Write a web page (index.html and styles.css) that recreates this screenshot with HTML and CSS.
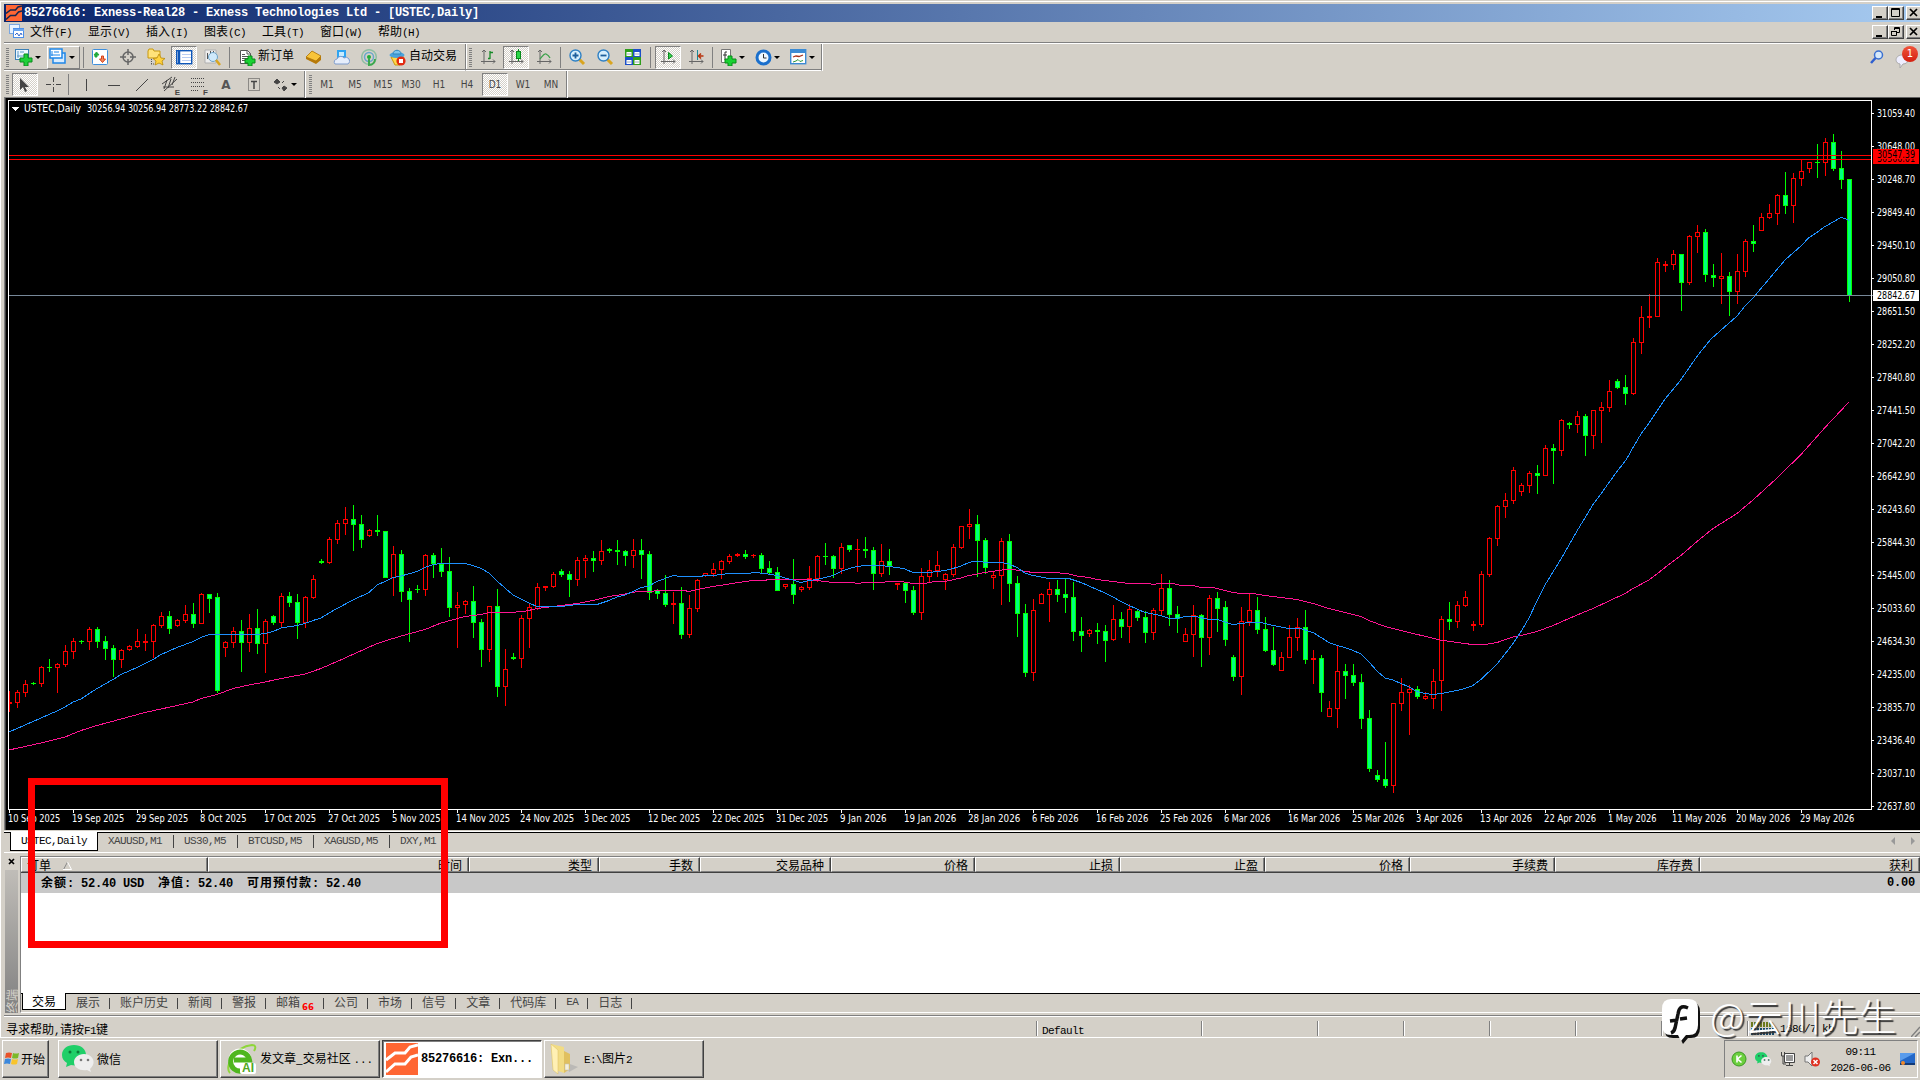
FILE: index.html
```html
<!DOCTYPE html>
<html lang="zh-CN">
<head>
    <meta charset="UTF-8">
    <title>85276616: Exness-Real28 - Exness Technologies Ltd - [USTEC,Daily]</title>
    <link rel="stylesheet" href="styles.css">
</head>
<body>
    <div class="window">
        <div class="titlebar">
            <svg class="app-icon" width="16" height="16" viewBox="0 0 32 32"><rect width="32" height="32" fill="#f63"/><path d="M0 17l9-7h10l5-6 8-2M0 29l9-8h10l6-7 7-2" fill="none" stroke="#12264f" stroke-width="3"/></svg>
            <span class="title">85276616: Exness-Real28 - Exness Technologies Ltd - [USTEC,Daily]</span>
            <div class="win-btns">
                <b><svg width="14" height="12"><path d="M3 9h6v2H3z"/></svg></b>
                <b><svg width="14" height="12"><path d="M2.500 1.500h8v8h-8zM2 2.500h9" fill="none" stroke="#000"/></svg></b>
                <b class="gap"><svg width="14" height="12"><path d="M3 2l7 7M10 2l-7 7" stroke="#000" stroke-width="1.700"/></svg></b>
            </div>
        </div>
        <div class="menubar">
            <svg class="menu-icon" width="15" height="15"><rect x=".5" y=".5" width="10" height="9" fill="#e8f3ff" stroke="#7aa7e0"/><rect x="4.500" y="4.500" width="10" height="9" fill="#fff" stroke="#4c8fe8"/><path d="M4 5h11v2H4z" fill="#6aa5f0"/><path d="M6 11l2-2 2 3 2-3 1 2" fill="none" stroke="#36c"/></svg>
            <span>文件<i>(F)</i></span><span>显示<i>(V)</i></span><span>插入<i>(I)</i></span><span>图表<i>(C)</i></span><span>工具<i>(T)</i></span><span>窗口<i>(W)</i></span><span>帮助<i>(H)</i></span>
            <div class="win-btns">
                <b><svg width="14" height="12"><path d="M3 9h6v2H3z"/></svg></b>
                <b><svg width="14" height="12"><path d="M5.500 4V1.500h5v5H8M5 2.500h6M2.500 5.500h5v4h-5zM2 5.500h6" fill="none" stroke="#000"/></svg></b>
                <b class="gap"><svg width="14" height="12"><path d="M3 2l7 7M10 2l-7 7" stroke="#000" stroke-width="1.700"/></svg></b>
            </div>
        </div>

        <div class="toolbar">
            <div class="band band-main">
                <em class="grip"></em>
                <div class="drop new-chart">
                    <svg width="18" height="18"><rect x=".5" y="1.500" width="13" height="10" fill="#eef7ff" stroke="#3c7fb5"/><path d="M3 3v7M2 8h9M5 4h4" stroke="#5a9ac8"/><path d="M9 6h4v4h4v4h-4v4H9v-4H5v-4h4z" fill="#1fd03a" stroke="#0a8a1c"/></svg>
                </div>
                <div class="drop raised">
                    <svg width="18" height="18"><rect x="4" y="5" width="12" height="10" fill="#d8ecff" stroke="#1e86e8" stroke-width="1.500"/><rect x="1" y="1" width="12" height="9" fill="#fff" stroke="#1e86e8" stroke-width="1.500"/><path d="M3 3v5M2 7h9M5 4h5" stroke="#1e86e8"/></svg>
                </div>
                <em class="sep"></em>
                <div class="tool"><svg width="16" height="16"><rect x=".5" y=".5" width="15" height="15" rx="1" fill="#fff" stroke="#3f8fdc"/><path d="M3 8h2V6h2L4.500 3 2 6h1z" fill="#22a93a" stroke="#22a93a"/><path d="M9.500 7h2v3h2l-3 3.500-3-3.500h2z" fill="#f08a5c" stroke="#d8401a"/></svg></div>
                <div class="tool"><svg width="16" height="16" fill="none" stroke="#666" stroke-width="1.500"><circle cx="8" cy="8" r="5"/><path d="M8 0v6M8 10v6M0 8h6M10 8h6"/></svg></div>
                <div class="tool"><svg width="18" height="18"><path d="M1 3l1-2h4l1 2h6v7H1z" fill="#ffe27a" stroke="#c8980c"/><path d="M4.500 11v6M4 16h4" stroke="#555" stroke-dasharray="1 1"/><path d="M12 6l2 4 4 .5-3 2.500 1 4-4-2-4 2 1-4-3-2.500 4-.5z" fill="#ffd23e" stroke="#b98908" stroke-width=".8"/></svg></div>
                <div class="tool on"><svg width="17" height="15"><rect x=".7" y=".7" width="15" height="13" fill="#fff" stroke="#0d56b8" stroke-width="1.400"/><path d="M3 1v13" stroke="#0d56b8" stroke-width="2.500"/><path d="M6 4.500h9M6 7.500h9M6 10.500h9" stroke="#b8cdf2"/></svg></div>
                <div class="tool"><svg width="17" height="17"><path d="M1 1h11v13H1z" fill="#eee" stroke="#b0b0b0"/><path d="M3.500 4v6M6.500 2v4M9.500 2v3" stroke="#555"/><circle cx="9" cy="8" r="4.500" fill="#cfe9fb" stroke="#6ea2c6"/><path d="M12 11l4 5" stroke="#d9a520" stroke-width="2.500"/></svg></div>
                <em class="sep"></em>
                <div class="label-tool order"><svg width="17" height="17"><path d="M1.500 1.500h7l3 3v10h-10z" fill="#fff" stroke="#555"/><path d="M8 1v4h4M3 7.500h6M3 9.500h6M3 11.500h4M3 5.500h3" stroke="#555" fill="none"/><path d="M9 7h4v3h3v4h-3v3H9v-3H6v-4h3z" fill="#19d132" stroke="#088a18"/></svg><span>新订单</span></div>
                <div class="tool"><svg width="17" height="16"><path d="M1 8l6-6 9 5v4l-5 4-10-5z" fill="#b87a08"/><path d="M1 8l6-6 9 5-5 5z" fill="#f8c43a" stroke="#a87008" stroke-width=".7"/></svg></div>
                <div class="tool"><svg width="17" height="17"><path d="M4 1h9v9H4z" fill="#2ea4f2"/><path d="M6 3h5v4H6z" fill="#c8ecff"/><path d="M2 15a3 3 0 0 1 2-5 4 4 0 0 1 7-1 3 3 0 0 1 4 6z" fill="#e6eefb" stroke="#7f9ccc"/></svg></div>
                <div class="tool"><svg width="17" height="17" fill="none"><circle cx="8" cy="8" r="7.300" stroke="#8fbfa4" stroke-width="1.500"/><circle cx="8" cy="8" r="4.500" stroke="#6aa6cc" stroke-width="1.500"/><circle cx="8" cy="8" r="2" fill="#1fae3a"/><path d="M8 9v7c4 0 6-3 6-6" stroke="#3ba84e" stroke-width="2"/></svg></div>
                <div class="label-tool auto"><svg width="17" height="17"><path d="M2 8h13l-4 8H6z" fill="#ffd84a" stroke="#c8980c"/><ellipse cx="8" cy="6" rx="7.500" ry="3" fill="#4aa3dc"/><path d="M4 5c0-5 8-5 8 0z" fill="#7cc4ee" stroke="#2f86bd"/><circle cx="12" cy="12" r="4.600" fill="#e22b12"/><rect x="10" y="10" width="4" height="4" fill="#fff"/></svg><span>自动交易</span></div>
            </div>
            <div class="band band-chart">
                <em class="grip"></em>
                <div class="tool"><svg width="15" height="16"><path d="M3 1v14M0 12.500h14M1 3l2-2 2 2M12 10.500l2 2-2 2" fill="none" stroke="#666"/><path d="M9 2v8M9 3.500h3M7 9.500h2" stroke="#178a28" stroke-width="1.300"/></svg></div>
                <div class="tool on"><svg width="15" height="16"><path d="M3 1v14M0 12.500h14M1 3l2-2 2 2M12 10.500l2 2-2 2" fill="none" stroke="#666"/><path d="M9.500 0v12" stroke="#078a1b"/><rect x="7.500" y="2.500" width="4" height="7" fill="#2bd648" stroke="#078a1b"/></svg></div>
                <div class="tool"><svg width="15" height="16"><path d="M3 1v14M0 12.500h14M1 3l2-2 2 2M12 10.500l2 2-2 2" fill="none" stroke="#666"/><path d="M3 10c2-2 4-6 6-5s3 2 4 4" fill="none" stroke="#3da24b" stroke-width="1.300"/></svg></div>
                <em class="sep"></em>
                <div class="tool"><svg width="17" height="17"><path d="M10 10l5 5" stroke="#d9a520" stroke-width="3"/><circle cx="6.500" cy="6.500" r="5.500" fill="#d6effd" stroke="#2f80c4" stroke-width="1.400"/><path d="M3.500 6.500h6M6.500 3.500v6" stroke="#1d5f9c" stroke-width="1.800"/></svg></div>
                <div class="tool"><svg width="17" height="17"><path d="M10 10l5 5" stroke="#d9a520" stroke-width="3"/><circle cx="6.500" cy="6.500" r="5.500" fill="#d6effd" stroke="#2f80c4" stroke-width="1.400"/><path d="M3.500 6.500h6" stroke="#1d5f9c" stroke-width="1.800"/></svg></div>
                <div class="tool"><svg width="16" height="16"><path d="M0 0h8v8H0zM8 8h8v8H8z" fill="#2f9e1c"/><path d="M8 0h8v8H8zM0 8h8v8H0z" fill="#1c4fc8"/><path d="M1.500 3h5v4h-5zM9.500 3h5v4h-5zM1.500 11h5v4h-5zM9.500 11h5v4h-5z" fill="#fff"/><path d="M2 5h4M10 5h4M2 13h4M10 13h4" stroke="#9ab"/></svg></div>
                <em class="sep wide"></em>
                <div class="tool on"><svg width="15" height="16"><path d="M3 1v14M0 12.500h14M1 3l2-2 2 2M12 10.500l2 2-2 2" fill="none" stroke="#666"/><path d="M7.500 3.500l4 3.500-4 3z" fill="#35d04c" stroke="#078a1b"/></svg></div>
                <div class="tool"><svg width="15" height="16"><path d="M3 1v14M0 12.500h14M1 3l2-2 2 2M12 10.500l2 2-2 2" fill="none" stroke="#666"/><path d="M8.500 1v10" stroke="#178a9a"/><path d="M9.500 7h5M12 4.500L9.500 7l2.500 2.500" stroke="#b8320c" stroke-width="1.500" fill="none"/></svg></div>
                <em class="sep"></em>
                <div class="drop"><svg width="17" height="18"><path d="M1.500 1.500h9v13h-9z" fill="#fff" stroke="#777"/><path d="M7 4H5v8M3 7h4" stroke="#333" fill="none"/><path d="M8 8h4v3h4v4h-4v3H8v-3H5v-4h3z" fill="#19d132" stroke="#088a18"/></svg></div>
                <div class="drop"><svg width="17" height="17"><circle cx="8.500" cy="8.500" r="6.500" fill="#eef8ff" stroke="#1a6fcc" stroke-width="3"/><path d="M8.500 5v4h3" stroke="#333" fill="none"/></svg></div>
                <div class="drop"><svg width="17" height="16"><rect x=".7" y=".7" width="15" height="14" fill="#fff" stroke="#3c8bd4" stroke-width="1.400"/><path d="M1 2.500h15" stroke="#3c8bd4" stroke-width="3"/><path d="M3 8l3-1 3 .5 4-1.500" stroke="#a8321c" fill="none" stroke-width="1.300"/><path d="M3 13l3-1 2-1.500 2 2 3-1" stroke="#2f9a3a" fill="none"/></svg></div>
            </div>
            <svg class="search" width="14" height="15"><circle cx="8.500" cy="5" r="4" fill="#d7e9fb" stroke="#3a6fd0" stroke-width="1.500"/><path d="M5.500 8L1 13" stroke="#2f5fd0" stroke-width="2.500"/></svg>
            <div class="chat"><svg width="15" height="15"><path d="M7 1c8 0 8 9 1 9l-3 4V10C-1 9 0 1 7 1z" fill="#eef" stroke="#aaa"/></svg><u>1</u></div>
        </div>

        <div class="toolbar second">
            <div class="band band-draw">
                <em class="grip"></em>
                <div class="tool on"><svg width="12" height="16"><path d="M2 1v12l3-3 2 5 2-1-2-4h4z" fill="#444"/></svg></div>
                <div class="tool"><svg width="15" height="15"><path d="M7.500 0v5M7.500 10v5M0 7.500h5M10 7.500h5M7.500 7v1" stroke="#444"/></svg></div>
                <em class="sep"></em>
                <div class="tool"><svg width="14" height="14"><path d="M7.500 1v12" stroke="#444"/></svg></div>
                <div class="tool"><svg width="14" height="14"><path d="M1 7.500h12" stroke="#444"/></svg></div>
                <div class="tool"><svg width="14" height="14"><path d="M1 13L13 1" stroke="#444"/></svg></div>
                <div class="tool"><svg width="18" height="17"><path d="M1 8l10-7M3 15L16 3M2 11h11M3 13L6 4M7 12l3-9M11 9l3-8" stroke="#444" fill="none"/></svg><s>E</s></div>
                <div class="tool"><svg width="17" height="15"><path d="M1 1.500h14M1 5.500h14M1 9.500h14M1 13.500h8" stroke="#444" stroke-dasharray="1 1"/></svg><s>F</s></div>
                <div class="tool letter">A</div>
                <div class="tool"><svg width="14" height="15"><rect x="1.500" y="1.500" width="11" height="12" fill="none" stroke="#444" stroke-dasharray="1 1"/><path d="M4 4.500h6M7 4v8" stroke="#444" stroke-width="1.500"/></svg></div>
                <div class="drop"><svg width="16" height="14"><path d="M1 4l3-3 3 3-3 2zM9 10l2-2 3 2-3 3zM5 9l2 2M9 5l2-2" fill="#444" stroke="#444"/></svg></div>
            </div>
            <div class="band band-period">
                <em class="grip"></em>
                <span>M1</span><span>M5</span><span>M15</span><span>M30</span><span>H1</span><span>H4</span><span class="on">D1</span><span>W1</span><span>MN</span>
            </div>
        </div>

        <svg class="chart" id="chart" width="1914" height="732" viewBox="6 98 1914 732"></svg>

        <div class="chart-tabs">
            <span class="active">USTEC,Daily</span><span>XAUUSD,M1</span><span>US30,M5</span><span>BTCUSD,M5</span><span>XAGUSD,M5</span><span>DXY,M1</span>
            <svg width="35" height="10"><path d="M10 1v8L6 5zM26 1v8l4-4z" fill="#999"/></svg>
        </div>

        <div class="terminal">
            <div class="side">
                <svg width="7" height="7"><path d="M1 1l5 5M6 1L1 6" stroke="#000" stroke-width="1.700"/></svg>
                <div class="side-bar"><span>终端</span></div>
            </div>
            <div class="panel">
                <div class="cols">
                    <span>订单 <svg width="9" height="9"><path d="M.5 8.500L4.500 1" stroke="#888"/><path d="M4.500 1l4 7.500H0" stroke="#fff" fill="none"/></svg></span><span>时间</span><span>类型</span><span>手数</span><span>交易品种</span><span>价格</span><span>止损</span><span>止盈</span><span>价格</span><span>手续费</span><span>库存费</span><span>获利</span>
                </div>
                <div class="summary">
                    <span>余额<i>: 52.40 USD</i></span><span>净值<i>: 52.40</i></span><span>可用预付款<i>: 52.40</i></span>
                    <i class="profit">0.00</i>
                </div>
                <div class="orders"></div>
                <div class="term-tabs">
                    <span class="active">交易</span><span>展示</span><span>账户历史</span><span>新闻</span><span>警报</span><span>邮箱<small>66</small></span><span>公司</span><span>市场</span><span>信号</span><span>文章</span><span>代码库</span><span><i>EA</i></span><span>日志</span>
                </div>
            </div>
        </div>

        <div class="status">
            <span class="help">寻求帮助<i>,</i>请按<i>F1</i>键</span>
            <span class="profile"><i>Default</i></span>
            <span class="time"></span><span></span><span></span><span></span><span></span><span></span>
            <span class="net"><svg width="24" height="13"><path d="M1 0v5M4 0v5M7 0v5M10 0v5M13 0v5M16 0v5M19 0v5M22 3v2" stroke="#6b7a1c" stroke-width="2"/><path d="M1 6v7M4 6v7M7 6v7M10 6v7M13 6v7M16 6v7M19 6v7M22 6v7" stroke="#174a6b" stroke-width="2"/></svg><i>1680/7 kb</i></span>
            <svg class="resize" width="9" height="12"><path d="M0 12L9 2M4 12l5-5" stroke="#808080" stroke-width="1.500"/></svg>
        </div>
    </div>

    <div class="taskbar">
        <div class="start"><svg width="16" height="16"><path d="M2 2q3-1 6 0L7 7Q4 6 1 7z" fill="#e8522a"/><path d="M9 2q3 1 6 0l-1 5q-3 1-6 0z" fill="#7cb928"/><path d="M1 8q3-1 6 0l-1 5q-3-1-6 0z" fill="#3c88dc"/><path d="M8 8q3 1 6 0l-1 5q-3 1-6 0z" fill="#f8c42c"/></svg>开始</div>
        <div class="task">
            <svg width="33" height="28"><path d="M12 0C5 0 0 4 0 10c0 4 2 6 5 8l-1 4 5-2c9 2 15-3 15-10C24 4 19 0 12 0z" fill="#1fcf68"/><circle cx="8" cy="7" r="1.500" fill="#0b7a38"/><circle cx="16" cy="7" r="1.500" fill="#0b7a38"/><path d="M22 9c-6 0-10 4-10 8 0 6 6 9 13 8l4 2-1-3c7-6 3-15-6-15z" fill="#eee"/><circle cx="19" cy="15" r="1.300" fill="#777"/><circle cx="26" cy="15" r="1.300" fill="#777"/></svg>
            <span>微信</span>
        </div>
        <div class="task browser">
            <svg width="32" height="32" viewBox="0 0 32 32"><path d="M4 30C-2 24 8 4 26 2c4 0 4 3 2 6" fill="none" stroke="#8fd63a" stroke-width="2"/><circle cx="14" cy="17" r="11.500" fill="#fff"/><path d="M23 22A9.500 9.500 0 1 1 23.500 17H8" fill="none" stroke="#4fb61e" stroke-width="5"/><rect x="14" y="20" width="16" height="11" rx="2" fill="#fff"/></svg>
            <b>AI</b>
            <span>发文章_交易社区 <i>...</i></span>
        </div>
        <div class="task current">
            <svg width="32" height="32"><rect width="32" height="32" fill="#f63"/><path d="M0 17l9-7h10l5-6 8-2M0 29l9-8h10l6-7 7-2" fill="none" stroke="#fff" stroke-width="3"/></svg>
            <i>85276616: Exn...</i>
        </div>
        <div class="task folder">
            <svg width="30" height="32"><path d="M18 20l11 4-9 5z" fill="#aaa" opacity=".6"/><path d="M2 1l13 3v26L4 26z" fill="#f2dc84"/><path d="M2 1l7 6v24l-5-4z" fill="#fff0b4" stroke="#d8bf60" stroke-width=".5"/><path d="M15 8l6 3v15l-6 4z" fill="#e0c060"/><rect x="16" y="21" width="4" height="6" fill="#f5f0d8" stroke="#bbb" stroke-width=".5"/></svg>
            <span><i>E:\</i>图片<i>2</i></span>
        </div>
        <div class="tray">
            <svg width="16" height="16"><circle cx="8" cy="8" r="7" fill="#6ccf3e" stroke="#3c9a24"/><path d="M6 4.500v7M10.500 4.500L6.500 8l4 3.500" stroke="#fff" fill="none" stroke-width="1.600"/></svg>
            <svg width="17" height="15" viewBox="0 0 33 28"><path d="M12 0C5 0 0 4 0 10c0 4 2 6 5 8l-1 4 5-2c9 2 15-3 15-10C24 4 19 0 12 0z" fill="#1fcf68"/><path d="M22 9c-6 0-10 4-10 8 0 6 6 9 13 8l4 2-1-3c7-6 3-15-6-15z" fill="#eee"/><path d="M17 15h3M25 15h3M6 7h3M14 7h3" stroke="#365" stroke-width="3"/></svg>
            <svg width="16" height="16"><path d="M4.500 2.500h10v9h-10z" fill="#999" stroke="#444"/><path d="M5.500 3.500h8v7h-8z" fill="none" stroke="#fff"/><path d="M6 14.500h7M9.500 12v2M1.500 1v4h3V1M3 5v8h3" fill="none" stroke="#444"/></svg>
            <svg width="17" height="16"><path d="M1 5h3l4-4v14l-4-4H1z" fill="#eee" stroke="#777"/><circle cx="11.500" cy="11" r="4.500" fill="#e03020"/><path d="M9.500 9l4 4M13.500 9l-4 4" stroke="#fff" stroke-width="1.500"/></svg>
            <div class="clock">09:11<br>2026-06-06</div>
            <svg width="15" height="13"><rect width="15" height="12" fill="#2468c8"/><path d="M0 0h15L0 8z" fill="#5a9cec"/><path d="M0 10h15v2H0z" fill="#123a78"/><circle cx="3" cy="10" r="2" fill="#f08a2c"/></svg>
        </div>
    </div>

    <div class="highlight"></div>
    <div class="watermark">
        <svg width="40" height="46"><path d="M10 1h18q9 0 9 10v16q0 10-9 10h-3l-5 6-3-6h-7q-9 0-9-10V11Q1 1 10 1z" fill="#111" transform="translate(2 2)"/><path d="M10 0h18q9 0 9 10v16q0 10-9 10h-3l-5 6-3-6h-7q-9 0-9-10V10Q1 0 10 0z" fill="#fff"/><path d="M27 9c-7-3-9 0-10 6l-3 14q-1 4-4 5M9 22l8-1M19 20l7-1" fill="none" stroke="#111" stroke-width="3.500"/></svg>
        <span>@云川先生</span>
    </div>
    <script src="chart.js"></script>
</body>
</html>
```
FILE: styles.css
```css
* {
    box-sizing: border-box;
}
body {
    margin: 0;
    width: 1920px;
    height: 1080px;
    overflow: hidden;
    position: relative;
    background: #d4d0c8;
    font-family: "Noto Sans CJK SC", sans-serif;
    font-size: 12px;
    line-height: 14px;
    color: #000;
}
svg {
    display: block;
    flex: none;
}
i {
    font-family: "Liberation Mono", monospace;
    font-style: normal;
    font-size: 11px;
    letter-spacing: -0.6px;
}
.window {
    height: 1038px;
    padding: 4px 0 0 4px;
    display: flex;
    flex-direction: column;
    border-bottom: 1px solid #fff;
    box-shadow: inset 0 1px #d4d0c8, inset 1px 2px #fff;
}
.titlebar {
    height: 18px;
    flex: none;
    display: flex;
    align-items: center;
    padding-left: 2px;
    background: linear-gradient(90deg, #0a246a, #a6caf0);
    color: #fff;
}
.title {
    margin-left: 2px;
    font: bold 12px/16px "Liberation Mono", monospace;
    letter-spacing: -0.2px;
    white-space: pre;
}
.win-btns {
    margin-left: auto;
    margin-right: -2px;
    display: flex;
}
.win-btns b {
    width: 16px;
    height: 14px;
    background: #d4d0c8;
    border: 1px solid;
    border-color: #fff #404040 #404040 #fff;
    box-shadow: inset -1px -1px #808080;
}
.win-btns .gap {
    margin-left: 2px;
}
.menubar {
    height: 22px;
    flex: none;
    display: flex;
    align-items: center;
    padding-left: 5px;
    padding-bottom: 2px;
    border-bottom: 1px solid #fff;
    box-shadow: inset 0 -1px #808080;
}
.menu-icon {
    margin-right: 6px;
}
.menubar span {
    width: 58px;
    white-space: nowrap;
}

/* toolbars */
.toolbar {
    height: 27px;
    flex: none;
    display: flex;
}
.toolbar.second {
    border-bottom: 1px solid #606060;
}
.band {
    height: 27px;
    display: flex;
    align-items: center;
    border-right: 1px solid #808080;
    border-bottom: 1px solid #fff;
    box-shadow: inset 0 -1px #808080, 1px 0 #fff;
}
.second .band {
    border-bottom: none;
}
.band-main {
    width: 462px;
}
.band-chart {
    width: 356px;
    padding-left: 1px;
}
.band-draw {
    width: 301px;
}
.band-period {
    width: 261px;
    padding-left: 1px;
    margin-left: 1px;
    color: #444;
    font: 10px/23px "DejaVu Sans Condensed", sans-serif;
}
.grip {
    width: 3px;
    height: 19px;
    margin: 0 3px 0 2px;
    flex: none;
    background: repeating-linear-gradient(#808080 0 1px, #d4d0c8 1px 2px);
}
.band-chart .grip,
.band-draw .grip {
    margin-right: 2px;
}
.band-period .grip {
    margin-right: 1px;
}
.sep {
    width: 1px;
    height: 21px;
    margin: 0 2px;
    flex: none;
    background: #808080;
}
.band-draw .sep {
    margin: 0 3px 0 1px;
}
.sep.wide {
    margin: 0 3px;
}
.tool {
    position: relative;
    width: 28px;
    height: 23px;
    flex: none;
    display: flex;
    align-items: center;
    justify-content: center;
}
.on {
    background: conic-gradient(#fff 25%, #d4d0c8 0 50%, #fff 0 75%, #d4d0c8 0) 0 0 / 2px 2px;
    border: 1px solid;
    border-color: #808080 #fff #fff #808080;
}
.tool.on {
    width: 26px;
    margin: 0 1px;
}
.band-draw .on {
    padding-right: 2px;
}
.tool s {
    position: absolute;
    right: 4px;
    bottom: -1px;
    font: bold 8px/8px "Liberation Sans", sans-serif;
    color: #444;
    text-decoration: none;
}
.letter {
    font: bold 12px "DejaVu Sans", sans-serif;
    color: #555;
}
.drop {
    width: 35px;
    height: 23px;
    padding-left: 5px;
    flex: none;
    display: flex;
    align-items: center;
}
.drop::after {
    content: "";
    margin-left: 2px;
    border: 3px solid transparent;
    border-top-color: #000;
    border-bottom: none;
}
.drop.new-chart {
    padding-left: 3px;
}
.drop.raised {
    width: 33px;
    padding-left: 1px;
    border: 1px solid;
    border-color: #fff #808080 #808080 #fff;
}
.band-main .sep {
    margin: 0 2px 0 3px;
}
.label-tool {
    display: flex;
    align-items: center;
    gap: 2px;
    flex: none;
    white-space: nowrap;
}
.label-tool span {
    margin-top: -4px;
}
.label-tool.order {
    width: 67px;
    padding-left: 7px;
}
.label-tool.auto {
    padding-left: 6px;
    gap: 3px;
}
.band-period span {
    width: 28px;
    height: 23px;
    text-align: center;
    flex: none;
}
.band-period .on {
    width: 26px;
    margin: 0 1px;
    line-height: 21px;
}
.search {
    margin: 6px 0 0 1048px;
}
.chat {
    position: relative;
    margin: 10px 0 0 11px;
}
.chat u {
    position: absolute;
    left: 7px;
    top: -8px;
    width: 16px;
    height: 16px;
    border-radius: 50%;
    background: linear-gradient(#f0543a, #d42010);
    color: #fff;
    font: 10px/16px "DejaVu Sans", sans-serif;
    text-align: center;
    text-decoration: none;
}

/* chart */
.chart {
    margin-left: 2px;
    background: #000;
    box-shadow: -1px 0 #404040, -2px 0 #808080;
    font-family: "DejaVu Sans Condensed", "DejaVu Sans", sans-serif;
    font-size: 10px;
}
.chart text {
    fill: #fff;
}
.chart text.dark {
    fill: #000;
}
.up {
    fill: none;
    stroke: #f00;
}
.down {
    fill: #00ff7f;
    stroke: #0f0;
}
.axis {
    fill: none;
    stroke: #fff;
}
.ma {
    fill: none;
    stroke: #1e90ff;
}
.ma.slow {
    stroke: #ff1493;
}
.chart-tabs {
    height: 23px;
    flex: none;
    display: flex;
    padding-left: 6px;
    border-bottom: 1px solid #fff;
    background: linear-gradient(#d4d0c8 1px, #fff 1px 2px, #000 2px 3px, #d4d0c8 3px);
    color: #444;
    font: 11px/14px "Liberation Mono", monospace;
    letter-spacing: -0.6px;
}
.chart-tabs span {
    margin-top: 5px;
    height: 13px;
    line-height: 12px;
    padding: 0 11px 0 10px;
    border-right: 1px solid #444;
}
.chart-tabs .active {
    margin-top: 2px;
    height: 19px;
    line-height: 18px;
    padding: 0 10px;
    background: #fff;
    border: 1px solid #000;
    border-top: none;
    color: #000;
}
.chart-tabs svg {
    margin: 6px 0 0 auto;
}

/* terminal */
.terminal {
    height: 163px;
    flex: none;
    display: flex;
    padding-top: 3px;
    border-bottom: 1px solid #808080;
}
.side {
    width: 16px;
    padding: 2px 2px 0 1px;
    display: flex;
    flex-direction: column;
}
.side svg {
    margin: 0 0 5px 3px;
}
.side-bar {
    flex: 1;
    margin-bottom: 2px;
    background: linear-gradient(#c0bdb8, #808080);
    color: #d4d0c8;
    display: flex;
    align-items: flex-end;
}
.side-bar span {
    writing-mode: vertical-rl;
    text-orientation: sideways;
    transform: rotate(180deg);
    line-height: 13px;
}
.panel {
    flex: 1;
    display: flex;
    flex-direction: column;
    border-top: 1px solid #808080;
    border-left: 1px solid #808080;
    border-bottom: 1px solid #fff;
    margin-bottom: 2px;
}
.cols {
    height: 16px;
    flex: none;
    display: grid;
    grid-template-columns: 187px 261px 130px 101px 131px 144px 145px 145px 145px 145px 145px 220px;
    border-bottom: 1px solid #404040;
}
.cols span {
    padding-right: 6px;
    line-height: 13px;
    text-align: right;
    border: 1px solid;
    border-color: #fff #404040 #808080 #fff;
    box-shadow: inset -1px 0 #808080;
    white-space: nowrap;
}
.cols span:first-child {
    display: flex;
    gap: 12px;
    padding: 0 0 0 5px;
}
.cols svg {
    margin-top: 3px;
}
.summary {
    height: 20px;
    flex: none;
    display: flex;
    align-items: center;
    gap: 14px;
    padding: 0 5px 0 20px;
    background: #c8c8c8;
    font-weight: bold;
    letter-spacing: 1px;
}
.summary i {
    font-size: 12px;
    letter-spacing: -0.2px;
    white-space: pre;
}
.profit {
    margin-left: auto;
}
.orders {
    flex: 1;
    background: #fff;
}
.term-tabs {
    height: 19px;
    flex: none;
    display: flex;
    border-top: 1px solid #000;
    color: #444;
}
.term-tabs span {
    display: flex;
    margin-top: 2px;
    padding: 0 10px;
    height: 14px;
    line-height: 12px;
    position: relative;
}
.term-tabs span:not(.active)::after {
    content: "";
    position: absolute;
    right: 0;
    top: 2px;
    height: 11px;
    border-right: 1px solid #444;
}
.term-tabs .active {
    margin: -1px 0 0 1px;
    width: 44px;
    height: 17px;
    line-height: 16px;
    padding: 0 9px;
    background: #fff;
    color: #000;
    border: 1px solid #000;
    border-top: none;
}
.term-tabs small {
    margin: 6px -1px 0 2px;
    width: 13px;
    color: #f00;
    font: bold 8.5px/10px "DejaVu Sans", sans-serif;
}
.status {
    flex: 1;
    display: flex;
    align-items: flex-end;
    border-top: 1px solid #fff;
}
.status span {
    flex: none;
    width: 86px;
    height: 15px;
    margin-bottom: 1px;
    padding: 1px 0 0 5px;
    border-left: 1px solid #808080;
    box-shadow: inset 1px 0 #fff;
    white-space: nowrap;
}
.status .help {
    width: 1032px;
    padding: 1px 0 0 2px;
    border: none;
    box-shadow: none;
}
.status .profile {
    width: 165px;
}
.status .time {
    width: 116px;
}
.status .net {
    width: 160px;
    display: flex;
    gap: 5px;
    padding: 1px 0 0 3px;
}
.resize {
    margin-left: auto;
}

/* taskbar */
.taskbar {
    height: 42px;
    padding: 2px;
    display: flex;
}
.start,
.task {
    position: relative;
    height: 38px;
    display: flex;
    align-items: center;
    border: 1px solid;
    border-color: #fff #404040 #404040 #fff;
    box-shadow: inset -1px -1px #808080;
    white-space: nowrap;
}
.start {
    width: 47px;
    margin-right: 9px;
    padding-left: 1px;
    gap: 1px;
}
.task {
    width: 160px;
    margin-right: 2px;
    padding-left: 3px;
    gap: 2px;
}
.browser {
    padding-left: 5px;
}
.browser i {
    letter-spacing: 0;
}
.browser b {
    position: absolute;
    left: 21px;
    bottom: 3px;
    font: bold 12px/12px "Liberation Sans", sans-serif;
    color: #4fa81e;
}
.current {
    background: #fff;
    border-color: #404040 #fff #fff #404040;
    box-shadow: inset 1px 1px #808080;
}
.current i {
    margin-left: 1px;
    font-size: 12px;
    font-weight: bold;
    letter-spacing: -0.2px;
}
.folder {
    padding-left: 4px;
    gap: 5px;
}
.tray {
    width: 194px;
    height: 38px;
    margin-left: auto;
    padding: 0 2px 0 6px;
    display: flex;
    align-items: center;
    gap: 8px;
    border: 1px solid;
    border-color: #808080 #fff #fff #808080;
}
.clock {
    flex: 1;
    padding-top: 1px;
    font: 11px/16px "Liberation Mono", monospace;
    letter-spacing: -0.6px;
    text-align: center;
}

/* overlays */
.highlight {
    position: absolute;
    left: 28px;
    top: 778px;
    width: 420px;
    height: 170px;
    border: 7px solid #f00;
}
.watermark {
    position: absolute;
    left: 1661px;
    top: 999px;
    display: flex;
    gap: 9px;
    color: #fff;
    font-size: 38px;
    line-height: 40px;
    text-shadow: 2px 2px 1px #333;
    white-space: nowrap;
}
.watermark span {
    margin-top: -4px;
    font-weight: 300;
}
```
FILE: chart.js
```js
// one candle every 8px: direction, high, body top, body bottom, low
const candles = `
r691,702,704,712 r690,692,703,708 r680,684,693,697 g682,683,684,685 r666,667,684,687 g659,667,668,672 r663,664,668,693 r645,651,665,667
r638,641,652,659 g640,641,642,644 r627,629,642,650 g627,629,642,648 g636,641,649,660 g645,648,660,677 r649,650,660,668 r645,646,650,651
r629,641,647,648 r634,641,643,651 r624,625,642,658 r612,616,626,628 g611,616,629,634 r619,620,626,627 r605,614,621,623 g603,614,624,628
r593,594,624,624 g594,594,599,613 g593,597,691,693 r641,642,648,657 r627,631,643,648 g620,631,643,672 r614,628,643,652 g609,628,644,654
r619,621,644,673 g615,616,623,625 r593,596,623,627 g592,596,603,607 g594,602,623,639 r596,597,623,628 r575,579,598,599 g559,561,563,564
r537,539,563,564 r520,523,540,544 r507,519,524,535 g505,519,525,551 g515,524,540,548 r529,530,536,537 g515,530,532,536 g531,531,578,578
r546,554,578,596 g550,554,592,602 g588,591,600,642 g585,589,590,593 r554,555,590,596 g553,555,564,578 g548,564,572,577 g557,571,608,617
r592,605,608,648 r600,601,605,614 g586,601,623,638 g619,622,650,667 r606,606,650,662 g589,606,687,697 r649,669,687,706 g653,657,659,660
r615,618,659,668 r604,607,619,648 r583,587,609,610 r586,586,588,591 r572,574,587,588 g569,571,575,577 g571,574,580,597 r557,560,580,586
r555,558,561,578 g551,558,561,572 r540,551,561,565 g548,549,551,553 g540,550,552,565 g550,551,556,566 r539,550,556,568 g539,550,555,579
g551,554,593,600 g589,590,594,599 g575,593,605,607 r592,603,605,624 g587,603,635,639 r595,608,635,638 r579,580,609,612 r573,573,576,577
r563,569,574,577 r560,561,570,579 r554,556,562,564 r553,554,556,557 g550,554,557,559 r554,555,556,558 g553,555,569,573 g561,568,573,574
g567,572,591,591 r584,584,587,589 g559,584,595,604 r586,587,590,592 r566,578,588,590 r555,556,579,582 g543,556,557,565 g555,556,569,578
r543,547,569,574 g545,545,550,552 r539,549,550,572 g537,549,551,558 g547,550,574,590 r544,561,574,577 g549,561,566,575 r583,583,585,590
g582,583,591,603 g586,590,613,615 r568,576,613,620 r560,570,577,582 r551,565,571,577 r573,574,580,590 r544,547,575,577 r526,526,548,549
r509,524,527,539 g515,524,541,577 g538,540,568,574 r572,575,578,589 r538,541,576,605 g534,541,584,602 g576,583,614,637 g604,613,673,677
r599,610,673,681 r593,594,604,604 r582,589,595,622 g580,589,595,602 g579,594,598,613 g582,597,632,641 g617,631,636,652 r629,630,634,637
g623,630,632,644 g625,631,641,662 r605,619,640,641 g612,619,627,638 r604,609,627,643 g609,611,618,621 g611,617,633,643 r608,610,633,640
r574,588,611,615 g580,588,615,626 g606,614,619,633 r628,634,642,642 r605,615,635,657 g614,615,638,667 r595,598,638,655 g592,598,609,632
g601,607,640,646 g655,657,677,681 r607,621,677,695 r594,610,622,626 g597,610,630,634 g617,629,651,652 g627,650,665,666 r652,657,671,671
r625,637,658,658 r618,627,638,651 g610,627,660,664 r650,658,660,684 g655,658,693,712 r701,708,717,717 r646,671,709,728 g664,671,676,699
g664,675,683,686 g674,682,719,729 g710,718,769,772 g770,775,780,782 g742,779,786,788 r703,703,786,793 r678,692,704,711 r685,689,693,735
g686,689,697,699 r692,696,699,700 r669,681,699,709 r616,619,681,711 g602,619,622,630 r601,605,622,628 r591,597,606,607 r621,624,626,631
r571,574,625,627 r537,538,575,577 r505,506,539,546 r493,500,507,518 r467,470,501,504 r483,485,492,496 r471,473,486,493 g465,473,476,494
r445,448,476,476 g444,448,451,484 r419,420,451,456 g422,423,425,429 r411,416,425,433 g414,416,436,456 r410,410,436,449 r402,407,411,443
r380,391,408,412 g379,381,388,389 g375,387,394,405 r338,342,394,395 r306,317,343,354 r294,316,318,328 r258,262,317,317 r261,264,266,272
r250,254,265,270 g254,254,283,311 r235,236,283,285 r225,232,237,253 g229,232,275,282 g264,275,278,287 r253,276,279,304 g272,276,292,316
r254,271,292,304 r239,241,272,277 g225,241,244,252 r213,217,231,231 r204,213,218,219 r194,195,214,225 g172,195,206,214 r173,178,206,223
r160,171,179,186 r162,162,169,173 g144,162,163,178 r138,142,163,176 g134,142,169,171 g151,168,180,189 g179,179,296,302
`.trim().split(/\s+/);

const fastMa = `9,732 25,725 41,718 49,714.5 57,711 65,707 73,702 81,699 97,688.5 113,679.5 121,674.5 137,667.5 153,659.5 161,654.5 177,647.5
193,641.5 201,637.5 209,634.5 257,634.5 265,633.5 273,631.5 281,628 297,625.5 305,623.5 313,620.5 321,618 329,613 337,608.5 353,600
369,592.5 377,585 385,581.5 393,577.5 401,576 417,571.5 425,567.5 433,564.5 441,563.5 465,563.5 473,565.5 481,568.5 489,573 497,581
505,588 513,595 521,599 529,603 537,606.5 553,607 561,606.5 577,604.5 597,604.5 609,600.5 617,597 625,595 633,591.5 641,587.5 649,586
657,581.5 665,578.5 673,575.5 681,576.5 700,576.5 705,575.5 713,575.5 729,573.5 748,573.5 754,572.5 765,573.5 777,575.5 785,578
793,580 801,582.5 809,580.5 817,579.5 825,577.5 833,575.5 841,571.5 849,568.5 857,566.5 865,565.5 881,565.5 897,567.5 905,569 913,572.5
929,572.5 945,570.5 953,568.5 961,566 969,562.5 973,561.5 981,561.5 985,562.5 1001,562.5 1009,564 1017,567.5 1025,573 1033,575.5
1049,578.5 1069,578.5 1081,582.5 1089,586 1105,593 1113,597 1121,601.5 1129,605.5 1145,612.5 1161,615.5 1169,618.5 1177,618.5
1185,616.5 1196,616.5 1209,619.5 1218,619.5 1225,622 1233,624.5 1249,622.5 1261,622.5 1273,625.5 1289,628.5 1300,628.5 1313,632.5
1321,637.5 1329,642.5 1337,645.5 1345,647.5 1353,650.5 1361,654 1369,662 1377,671 1385,678 1393,680 1401,683.5 1409,687 1417,691.5
1425,693.5 1433,694.5 1441,693.5 1457,690.5 1465,688.5 1473,685.5 1481,679.5 1497,664 1505,654 1513,643.5 1521,631.5 1529,618 1537,601
1545,585 1561,559 1577,531 1593,504.5 1601,494 1609,482.5 1617,471.5 1626,460 1633,447.5 1641,434 1649,423 1665,399 1680,381 1698,355
1711,339 1737,316 1745,306 1753,298 1785,260 1801,246 1809,237.5 1817,232.5 1825,226.5 1833,222 1841,217.5 1845,218.5 1849,220.5`;

const slowMa = `9,750 41,743 65,737 81,730.5 97,725.5 121,719 145,712.5 161,709 193,702 201,698.5 217,694.5 233,688.5 249,685 265,682
281,678.5 305,674 321,668.5 345,658 377,643.5 401,636 425,629.5 441,623 465,616.5 481,614.5 489,612.5 508,612.5 524,611.5 537,608.5
561,605.5 577,603.5 593,600.5 609,596.5 625,594 637,591.5 652,591.5 656,590.5 684,590.5 689,591.5 697,589.5 713,586.5 729,584
745,581.5 753,580.5 764,580.5 769,579.5 805,579.5 817,580.5 833,582.5 853,582.5 857,583.5 865,582.5 881,582.5 889,581.5 901,581.5
913,583.5 924,583.5 935,581.5 945,581.5 961,578 969,575.5 985,572.5 1005,569.5 1012,569.5 1033,572.5 1053,572.5 1067,573.5
1077,576 1089,577.5 1097,579.5 1129,583.5 1149,583.5 1153,584.5 1159,583.5 1173,583.5 1181,585.5 1193,585.5 1201,587.5 1213,587.5
1233,592.5 1241,593.5 1253,593.5 1265,595.5 1297,599.5 1313,603.5 1329,608.5 1361,616.5 1369,620.5 1385,626.5 1401,630.5 1440,640
1472,644.5 1485,644.5 1497,642.5 1513,637 1521,635.5 1537,631.5 1553,625.5 1577,615 1593,608.5 1609,601 1625,593.5 1633,588.5
1649,580 1657,574 1665,567.5 1681,555.5 1697,541.5 1713,528.5 1737,513.5 1753,500 1777,478 1801,454.5 1825,427.5 1849,402`;

const prices = ["31059.40", "30648.00", "30248.70", "29849.40", "29450.10", "29050.80", "28651.50", "28252.20", "27840.80", "27441.50", "27042.20", "26642.90", "26243.60", "25844.30", "25445.00", "25033.60", "24634.30", "24235.00", "23835.70", "23436.40", "23037.10", "22637.80"];
const dates = ["10 Sep 2025", "19 Sep 2025", "29 Sep 2025", "8 Oct 2025", "17 Oct 2025", "27 Oct 2025", "5 Nov 2025", "14 Nov 2025", "24 Nov 2025", "3 Dec 2025", "12 Dec 2025", "22 Dec 2025", "31 Dec 2025", "9 Jan 2026", "19 Jan 2026", "28 Jan 2026", "6 Feb 2026", "16 Feb 2026", "25 Feb 2026", "6 Mar 2026", "16 Mar 2026", "25 Mar 2026", "3 Apr 2026", "13 Apr 2026", "22 Apr 2026", "1 May 2026", "11 May 2026", "20 May 2026", "29 May 2026"];

function label(x, y, width, text, cls) {
    return `<text x="${x}" y="${y}" class="${cls || ""}" textLength="${width}" lengthAdjust="spacingAndGlyphs">${text}</text>`;
}

let out = '<g shape-rendering="crispEdges">';
candles.forEach((c, i) => {
    const [high, top, bottom, low] = c.slice(1).split(",").map(Number);
    const x = 9 + i * 8;
    const cls = c[0] === "r" ? "up" : "down";
    out += `<path class="${cls}" d="M${x + 0.5} ${high}V${top}M${x + 0.5} ${bottom}V${low}"/>`;
    if (bottom - top < 2) {
        out += `<path class="${cls}" d="M${x - 2} ${top + 0.5}h5"/>`;
    } else {
        out += `<rect class="${cls}" x="${x - 1.5}" y="${top + 0.5}" width="4" height="${bottom - top - 1}"/>`;
    }
});
out += `<polyline class="ma slow" points="${slowMa}"/><polyline class="ma" points="${fastMa}"/>`;
out += '<path d="M9 155.500H1871M9 159.500H1871" stroke="#f00"/><path d="M9 295.500H1873" stroke="#778899"/>';
out += '<path fill="#000" d="M6 98h2v732h-2z"/><path class="axis" d="M1871.500 809.500V100.500H8.500V809.500H1872"/>';
prices.forEach((p, i) => out += `<path class="axis" d="M1872 ${113.5 + i * 33}h2"/>`);
dates.forEach((d, i) => out += `<path class="axis" d="M${9.5 + i * 64} 810v3"/>`);
out += '<path d="M12 107h7l-3.500 4z" fill="#fff"/></g>';

prices.forEach((p, i) => out += label(1877, 117 + i * 33, 38, p));
dates.forEach((d, i) => out += label(8 + i * 64, 822, d.length * 4.75 - (d.length < 11 ? 1 : 0) + (d.includes("May") || d.includes("Nov") ? 2 : 0), d));
out += '<path fill="#f00" d="M1873 154h46v10h-46z"/>' + label(1877, 162, 38, "30500.01", "dark");
out += '<path fill="#f00" d="M1873 149h46v10h-46z"/>' + label(1877, 158, 38, "30547.39", "dark");
out += '<path fill="#fff" d="M1873 290h46v11h-46z"/>' + label(1877, 299, 38, "28842.67", "dark");
out += label(24, 112, 57, "USTEC,Daily") + label(87, 112, 161, "30256.94 30256.94 28773.22 28842.67");
document.getElementById("chart").innerHTML = out;
```
